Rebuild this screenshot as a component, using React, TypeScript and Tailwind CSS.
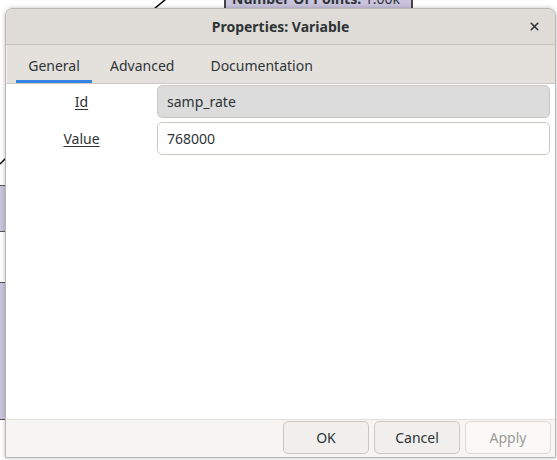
import { X } from 'lucide-react'

const tabs = ['General', 'Advanced', 'Documentation']

export default function App() {
  return (
    <div className="relative w-[557px] h-[460px] overflow-hidden bg-white font-['Noto_Sans',sans-serif] text-[#2e3436]">
      {/* canvas behind the dialog */}
      <svg className="absolute left-0 top-0" width="557" height="460">
        <line x1="154" y1="9" x2="166" y2="-1" stroke="#000" strokeWidth="1.5" />
        <line x1="0" y1="164" x2="6" y2="158" stroke="#000" strokeWidth="1.5" />
      </svg>
      <div className="absolute left-[224px] top-[-10px] w-[189px] h-[18px] bg-[#c9c4dc] border-x-2 border-[#444] overflow-hidden">
        <span className="block pl-[6px] text-[14px] leading-[18px] whitespace-nowrap">
          <b>Number Of Points:</b> 1.00k
        </span>
      </div>
      <div className="absolute left-0 top-[185px] w-[6px] h-[47px] bg-[#c9c4dc] border-y border-[#555]" />
      <div className="absolute left-0 top-[282px] w-[6px] h-[138px] bg-[#c9c4dc] border-y border-[#555]" />

      {/* dialog */}
      <div className="relative ml-[5px] mt-[8px] w-[551px] h-[450px] flex flex-col rounded-t-[8px] border border-[#b9b6b3] bg-white shadow-[0_0_4px_rgba(0,0,0,0.25)] overflow-hidden">
        <div className="h-[36px] shrink-0 flex items-center justify-center relative bg-[#dfdcd8] border-b border-[#c6c2bd]">
          <span className="text-[14px] font-bold">Properties: Variable</span>
          <X className="absolute right-[14px] top-[11px] w-[13px] h-[13px]" strokeWidth={3} />
        </div>

        <div className="h-[39px] shrink-0 flex items-end pl-[9px] bg-[#e4e1dd] border-b border-[#cdc8c3] border-l border-l-[#f4f3f1]">
          {tabs.map((t, i) => (
            <div
              key={t}
              className={`h-full flex items-center justify-center pt-[6px] text-[14px] border-b-[3px] ${
                i === 0 ? 'border-[#3584e4] w-[76px]' : 'border-transparent px-[18px]'
              }`}
            >
              {t}
            </div>
          ))}
        </div>

        <div className="flex-1 flex flex-col gap-[4px] pt-[1px] pr-[5px]">
          <div className="flex items-center">
            <span className="w-[151px] text-center text-[14px] underline underline-offset-2">Id</span>
            <div className="flex-1 h-[33px] flex items-center px-[9px] rounded-[5px] border border-[#cdc7c2] bg-[#dcdcdc] text-[14px]">
              samp_rate
            </div>
          </div>
          <div className="flex items-center">
            <span className="w-[151px] text-center text-[14px] underline underline-offset-2">Value</span>
            <div className="flex-1 h-[33px] flex items-center px-[9px] rounded-[5px] border border-[#cdc7c2] bg-white text-[14px]">
              768000
            </div>
          </div>
        </div>

        <div className="h-[38px] shrink-0 flex justify-end gap-[5px] pt-[1px] pr-[4px] bg-[#f6f5f4] border-t border-[#e2dfdc]">
          <button className="w-[86px] h-[33px] rounded-[5px] border border-[#cdc7c2] bg-[#f0efed] text-[14px]">OK</button>
          <button className="w-[86px] h-[33px] rounded-[5px] border border-[#cdc7c2] bg-[#f0efed] text-[14px]">Cancel</button>
          <button className="w-[86px] h-[33px] rounded-[5px] border border-[#ddd9d5] bg-[#faf9f8] text-[14px] text-[#9a9c98]">Apply</button>
        </div>
      </div>
    </div>
  )
}
